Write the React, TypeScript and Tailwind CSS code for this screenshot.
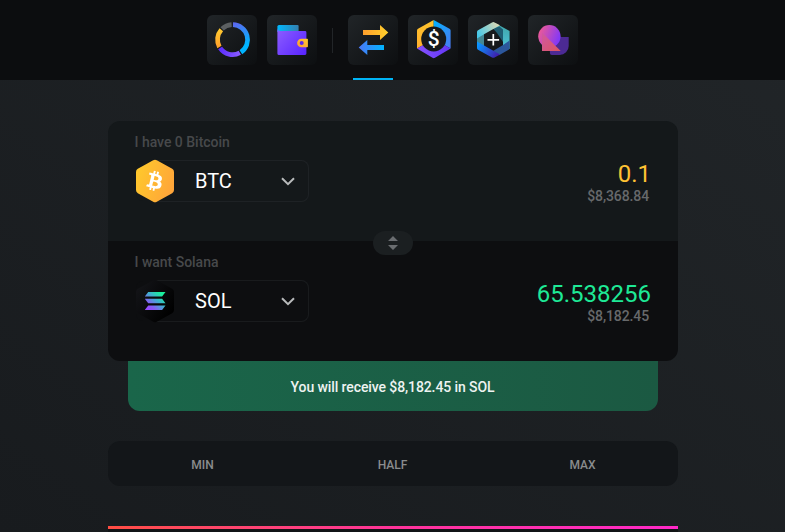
import React from 'react';
import { FaBtc } from 'react-icons/fa';

interface CoinRowProps {
  label: string;
  symbol: string;
  icon: React.ReactNode;
  amount: string;
  amountClass: string;
  value: string;
  className: string;
  borderClass: string;
}

function PortfolioIcon() {
  return (
    <svg viewBox="-0.4 0 50 50" className="size-full" fill="none" strokeWidth="4.7">
      <defs>
        <linearGradient id="ringBlue" x1="25" y1="10" x2="37" y2="38" gradientUnits="userSpaceOnUse">
          <stop stopColor="#5a6af0" />
          <stop offset="0.75" stopColor="#00b4ff" />
        </linearGradient>
        <linearGradient id="ringPurple" x1="12" y1="34" x2="33" y2="38" gradientUnits="userSpaceOnUse">
          <stop stopColor="#5a2cff" />
          <stop offset="1" stopColor="#8a5cff" />
        </linearGradient>
        <linearGradient id="ringGold" x1="13" y1="14" x2="13" y2="32" gradientUnits="userSpaceOnUse">
          <stop stopColor="#ffcb30" />
          <stop offset="1" stopColor="#ffa02c" />
        </linearGradient>
      </defs>
      <path d="M25.6 9.7A15 15 0 0 1 33.5 37.2" stroke="url(#ringBlue)" />
      <path d="M32.4 37.8A15 15 0 0 1 12.7 33" stroke="url(#ringPurple)" />
      <path d="M12 32A15 15 0 0 1 13.9 14.8" stroke="url(#ringGold)" />
      <path d="M14.7 13.9A15 15 0 0 1 24.2 9.7" stroke="#5c6062" />
    </svg>
  );
}

function WalletIcon() {
  return (
    <svg viewBox="-0.4 0 50 50" className="size-full">
      <defs>
        <linearGradient id="flap" x1="0" x2="1" y1="0" y2="0">
          <stop stopColor="#00b8ff" />
          <stop offset="1" stopColor="#347fae" />
        </linearGradient>
        <linearGradient id="purse" x1="0" x2="1" y1="0.1" y2="0.9">
          <stop stopColor="#8b5cff" />
          <stop offset="1" stopColor="#5a26ff" />
        </linearGradient>
        <linearGradient id="clasp" x1="0" x2="1" y1="1" y2="0">
          <stop stopColor="#ff9b30" />
          <stop offset="1" stopColor="#ffcc30" />
        </linearGradient>
      </defs>
      <path d="M11.600 10H30.200a1 1 0 0 1 1 1v6H10v-5.400a1.600 1.600 0 0 1 1.600-1.600z" fill="url(#flap)" />
      <path d="M10 13c0 2 1 3 3 3H37.600a1.400 1.400 0 0 1 1.400 1.400V38.600A1.400 1.400 0 0 1 37.600 40H11.600a1.600 1.600 0 0 1-1.600-1.600z" fill="url(#purse)" />
      <path d="M34 23.700H39.800a.700.700 0 0 1 .700.700v7.200a.700.700 0 0 1-.700.700H34a4.300 4.300 0 0 1 0-8.600z" fill="url(#clasp)" />
      <circle cx="34.300" cy="28" r="2" fill="#5a28f0" />
    </svg>
  );
}

function SwapIcon() {
  return (
    <svg viewBox="-0.500 0 50 50" className="size-full">
      <defs>
        <linearGradient id="swapGold" x1="0" x2="1" y1="0" y2="0">
          <stop stopColor="#ff9f2c" />
          <stop offset="1" stopColor="#ffd02c" />
        </linearGradient>
        <linearGradient id="swapBlue" x1="0" x2="1" y1="0" y2="0">
          <stop stopColor="#4c78f5" />
          <stop offset="1" stopColor="#00b4ff" />
        </linearGradient>
      </defs>
      <path d="M14.500 15h17v-5l8.300 7.500-8.300 7.500v-5H14.500z" fill="url(#swapGold)" />
      <path d="M35.500 30H18.800v-5l-8.600 7.500 8.600 7.500v-5H35.500z" fill="url(#swapBlue)" />
    </svg>
  );
}

function DollarIcon() {
  return (
    <svg viewBox="-0.500 0 50 50" className="size-full">
      <defs>
        <linearGradient id="hexGold" x1="0" x2="0" y1="0" y2="1">
          <stop stopColor="#ffc52c" />
          <stop offset="1" stopColor="#ffae2e" />
        </linearGradient>
        <linearGradient id="hexBlue" x1="0" x2="1" y1="0" y2="1">
          <stop stopColor="#00b4ff" />
          <stop offset="1" stopColor="#4c78f0" />
        </linearGradient>
        <linearGradient id="hexPurple" x1="0" x2="1" y1="0" y2="0">
          <stop stopColor="#8652ff" />
          <stop offset="1" stopColor="#6236f5" />
        </linearGradient>
      </defs>
      <path d="M25.200 4.900L9.500 13.700a2 2 0 0 0-1 1.700V33.600L25.200 24z" fill="url(#hexGold)" />
      <path d="M25.200 4.900L41 13.700a2 2 0 0 1 1.100 1.700V33.600L25.200 24z" fill="url(#hexBlue)" />
      <path d="M8.500 33.600L25.200 24l16.900 9.600L26.500 42.800a2.400 2.400 0 0 1-2.500 0z" fill="url(#hexPurple)" />
      <circle cx="25.200" cy="24" r="12.500" fill="#16191b" />
      <text x="25.200" y="31" textAnchor="middle" fill="#fff" fontSize="21" fontWeight="500" fontFamily="Roboto, sans-serif">$</text>
    </svg>
  );
}

function AddIcon() {
  return (
    <svg viewBox="0 0 50 50" className="size-full">
      <defs>
        <linearGradient id="bandTop" x1="10" y1="20" x2="30" y2="9" gradientUnits="userSpaceOnUse">
          <stop stopColor="#45c8e8" />
          <stop offset="1" stopColor="#dcd8b4" />
        </linearGradient>
        <linearGradient id="bandRight" x1="0" x2="0" y1="0" y2="1">
          <stop stopColor="#3fa3a6" />
          <stop offset="1" stopColor="#4cc4d8" />
        </linearGradient>
        <linearGradient id="bandBottom" x1="10" y1="30" x2="30" y2="42" gradientUnits="userSpaceOnUse">
          <stop stopColor="#0a94ff" />
          <stop offset="1" stopColor="#4218a8" />
        </linearGradient>
      </defs>
      <path d="M9 22.500L16 18v16l-7-4z" fill="#438895" />
      <path d="M27 8l14.600 8v18L35 30V19l-10-5.600z" fill="url(#bandRight)" />
      <path d="M31.500 11.500L35 14.500V27l-6-9-4-4.600z" fill="#1f5d72" />
      <path d="M9 23.500V17a2 2 0 0 1 1-1.700L24 7.400a2.600 2.600 0 0 1 2.600 0L32 10.300 16 19.300z" fill="url(#bandTop)" />
      <path d="M41.600 25.500V33a2 2 0 0 1-1 1.700L31 40.300 25 36l10-6z" fill="#2c579c" />
      <path d="M9 26.500L32 39.600 26.600 42.400a2.600 2.600 0 0 1-2.600 0L10 34.700A2 2 0 0 1 9 33z" fill="url(#bandBottom)" />
      <path d="M25.300 19v11.600M19.500 24.800h11.600" stroke="#fff" strokeWidth="1.700" />
    </svg>
  );
}

function ShapesIcon() {
  return (
    <svg viewBox="-0.400 0 50 50" className="size-full">
      <defs>
        <linearGradient id="shapeCircle" x1="0" x2="1" y1="0.3" y2="0.7">
          <stop stopColor="#ee5a96" />
          <stop offset="1" stopColor="#7a35ff" />
        </linearGradient>
        <linearGradient id="shapeTriangle" x1="0" x2="1" y1="0" y2="1">
          <stop stopColor="#d058a4" />
          <stop offset="1" stopColor="#dd5560" />
        </linearGradient>
      </defs>
      <path d="M21.500 22h18.800v9a9 9 0 0 1-9 9h-7.800a2 2 0 0 1-2-2z" fill="#4c2a94" />
      <circle cx="21" cy="21.300" r="11.200" fill="url(#shapeCircle)" />
      <path d="M13.600 17.500L32.300 36H13.600z" fill="url(#shapeTriangle)" />
    </svg>
  );
}

function BitcoinBadge() {
  return (
    <div className="relative flex h-[44px] w-[40px] items-center justify-center">
      <svg viewBox="0 0 40 44" className="absolute inset-0 size-full">
        <defs>
          <linearGradient id="btcHex" x1="0" x2="1" y1="0.3" y2="0.7">
            <stop stopColor="#ffc82c" />
            <stop offset="1" stopColor="#ffa43a" />
          </linearGradient>
        </defs>
        <path d="M18.200 1.300a3.500 3.500 0 0 1 3.600 0L37.200 9.800A3.600 3.600 0 0 1 39 13v18a3.600 3.600 0 0 1-1.800 3.200L21.800 42.700a3.500 3.500 0 0 1-3.600 0L2.800 34.200A3.600 3.600 0 0 1 1 31V13a3.600 3.600 0 0 1 1.800-3.200z" fill="url(#btcHex)" />
      </svg>
      <FaBtc className="relative size-5 rotate-[14deg] text-white" />
    </div>
  );
}

function SolanaBadge() {
  return (
    <svg viewBox="0 0 40 44" className="h-[44px] w-[40px]">
      <defs>
        <linearGradient id="solHex" x1="0" x2="1" y1="0" y2="0.7">
          <stop stopColor="#15161a" />
          <stop offset="1" stopColor="#000" />
        </linearGradient>
        <linearGradient id="solBars" x1="11" y1="32" x2="28" y2="13" gradientUnits="userSpaceOnUse">
          <stop stopColor="#9945ff" />
          <stop offset="0.25" stopColor="#8c55f7" />
          <stop offset="0.600" stopColor="#3fb0cf" />
          <stop offset="0.900" stopColor="#19f09c" />
        </linearGradient>
      </defs>
      <path d="M18.200 1.300a3.500 3.500 0 0 1 3.600 0L37.200 9.800A3.600 3.600 0 0 1 39 13v18a3.600 3.600 0 0 1-1.800 3.200L21.800 42.700a3.500 3.500 0 0 1-3.600 0L2.800 34.200A3.600 3.600 0 0 1 1 31V13a3.600 3.600 0 0 1 1.800-3.200z" fill="url(#solHex)" />
      <path d="M13.200 13h17.300l-3.400 4.600h-17.300zM9.800 19.700h17.300l3.400 4.600h-17.300zM13.200 26.400h17.300l-3.400 4.600h-17.300z" fill="url(#solBars)" />
    </svg>
  );
}

function NavTile({ active, children }: { active?: boolean; children: React.ReactNode }) {
  return (
    <div className="flex h-full flex-col items-center justify-between pt-[15px]">
      <button className="size-[50px] rounded-[6px] bg-linear-to-br from-[#212528] to-[#0d0f11]">{children}</button>
      {active && <span className="h-[2px] w-10 bg-[#00b4f5]" />}
    </div>
  );
}

function CoinRow({ label, symbol, icon, amount, amountClass, value, className, borderClass }: CoinRowProps) {
  return (
    <div className={`flex h-[120px] justify-between pr-[28px] pl-[27px] ${className}`}>
      <div className="pt-[11px]">
        <div className="text-[14px] leading-5 font-medium tracking-[-0.02px] text-[#47494b]">{label}</div>
        <button className={`mt-[8px] flex h-[42px] w-[174px] items-center rounded-lg p-px ${borderClass}`}>
          <span className={`flex h-full w-full items-center rounded-[7px] ${className}`}>
            <span className="-ml-px">{icon}</span>
            <span className="ml-[20.5px] flex-1 text-left text-[20px] leading-6 text-white">{symbol}</span>
            <svg viewBox="0 0 14 9" className="mr-[13px] h-[9px] w-[14px]" fill="none">
              <path d="M1 1.200l6 6 6-6" stroke="#b8babb" strokeWidth="2" />
            </svg>
          </span>
        </button>
      </div>
      <div className="pt-[39px] text-right">
        <div className={`-mr-[1.5px] text-[24px] leading-7 ${amountClass}`}>{amount}</div>
        <div className="mr-[0.5px] text-[14px] leading-4 font-medium tracking-[-0.1px] text-[#67696b]">{value}</div>
      </div>
    </div>
  );
}

export default function App() {
  return (
    <div className="h-[532px] w-[785px] overflow-hidden bg-linear-to-tr from-[#181b1e] to-[#212528] font-[Roboto,sans-serif]">
      <header className="flex h-20 justify-center bg-[#0c0d0f]">
        <div className="flex h-full gap-[10px]">
          <NavTile><PortfolioIcon /></NavTile>
          <NavTile><WalletIcon /></NavTile>
          <div className="mx-[5px] mt-[28px] h-[25px] w-px bg-[#222528]" />
          <NavTile active><SwapIcon /></NavTile>
          <NavTile><DollarIcon /></NavTile>
          <NavTile><AddIcon /></NavTile>
          <NavTile><ShapesIcon /></NavTile>
        </div>
      </header>

      <main className="mx-auto w-[570px] pt-[41px]">
        <section className="relative overflow-hidden rounded-xl">
          <CoinRow
            label="I have 0 Bitcoin"
            symbol="BTC"
            icon={<BitcoinBadge />}
            amount="0.1"
            amountClass="text-[#ffc233]"
            value="$8,368.84"
            className="bg-[#14181a]"
            borderClass="bg-[linear-gradient(90deg,transparent_20px,#1e2225_20px)]"
          />
          <CoinRow
            label="I want Solana"
            symbol="SOL"
            icon={<SolanaBadge />}
            amount="65.538256"
            amountClass="text-[#1ee996]"
            value="$8,182.45"
            className="bg-[#0d0e10]"
            borderClass="bg-[linear-gradient(90deg,transparent_20px,#191b1d_20px)]"
          />
          <button className="absolute top-[110px] left-[265px] flex h-6 w-10 items-center justify-center rounded-full bg-[#1b1f21]">
            <svg viewBox="0 0 10 14" className="h-[14px] w-[10px]" fill="#6a6d70">
              <path d="M5 0l5 5H0zM5 14l5-5H0z" />
            </svg>
          </button>
        </section>

        <div className="mx-5 flex h-[50px] items-center justify-center rounded-b-xl bg-linear-to-r from-[#1a664a] to-[#1b5942] pt-[2px] text-[14px] font-medium tracking-[-0.1px] text-[#eef3f1]">
          You will receive $8,182.45 in SOL
        </div>

        <div className="mt-[30px] grid h-[45px] grid-cols-3 items-center rounded-xl bg-[#131619] pt-[2px] text-center text-[12px] font-medium text-[#8a8c8d]">
          <button>MIN</button>
          <button>HALF</button>
          <button>MAX</button>
        </div>

        <div className="mt-10 h-[3px] bg-linear-to-r from-[#ff4d42] via-[#ff3399] to-[#ff28c8]" />
        <div className="h-[3px] bg-[#111416]" />
      </main>
    </div>
  );
}
